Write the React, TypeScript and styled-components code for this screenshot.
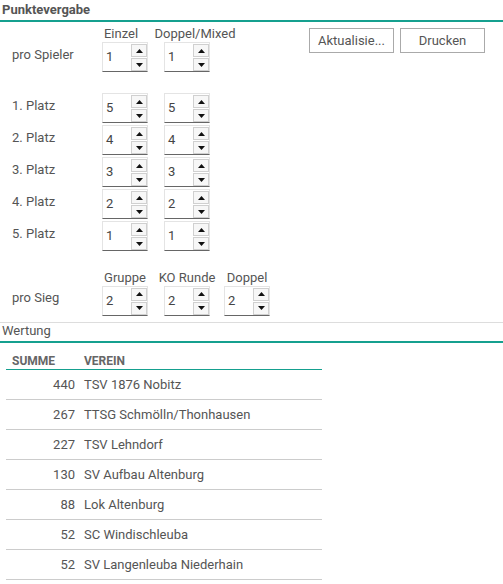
import styled, { createGlobalStyle } from 'styled-components';

const TEAL = '#15a08f';

const GlobalStyle = createGlobalStyle`
  body {
    margin: 0;
    font-family: Roboto, "Liberation Sans", sans-serif;
    font-size: 13px;
    color: #555;
    background: #fff;
  }
`;

type SpinnerProps = { value: number };

const Spinner = ({ value }: SpinnerProps) => (
  <SpinBox>
    <SpinValue>{value}</SpinValue>
    <SpinButtons>
      <SpinButton>
        <Arrow viewBox="0 0 7 4">
          <path d="M0 4 L3.5 0 L7 4 Z" />
        </Arrow>
      </SpinButton>
      <SpinButton>
        <Arrow viewBox="0 0 7 4">
          <path d="M0 0 L3.5 4 L7 0 Z" />
        </Arrow>
      </SpinButton>
    </SpinButtons>
  </SpinBox>
);

const platz = [
  { label: '1. Platz', einzel: 5, doppel: 5 },
  { label: '2. Platz', einzel: 4, doppel: 4 },
  { label: '3. Platz', einzel: 3, doppel: 3 },
  { label: '4. Platz', einzel: 2, doppel: 2 },
  { label: '5. Platz', einzel: 1, doppel: 1 },
];

const wertung = [
  { summe: 440, verein: 'TSV 1876 Nobitz' },
  { summe: 267, verein: 'TTSG Schmölln/Thonhausen' },
  { summe: 227, verein: 'TSV Lehndorf' },
  { summe: 130, verein: 'SV Aufbau Altenburg' },
  { summe: 88, verein: 'Lok Altenburg' },
  { summe: 52, verein: 'SC Windischleuba' },
  { summe: 52, verein: 'SV Langenleuba Niederhain' },
];

const App = (): JSX.Element => {
  return (
    <Page>
      <GlobalStyle />
      <SectionTitle>Punktevergabe</SectionTitle>

      <Panel>
        <Form>
          <HeaderRow>
            <Label />
            <ColHead $width={62} $shift={-4}>Einzel</ColHead>
            <ColHead $width={60} $shift={8}>Doppel/Mixed</ColHead>
          </HeaderRow>
          <Row>
            <Label>pro Spieler</Label>
            <Cell $width={62}><Spinner value={1} /></Cell>
            <Cell $width={60}><Spinner value={1} /></Cell>
          </Row>

          <PlatzList>
            {platz.map(p => (
              <Row key={p.label}>
                <Label>{p.label}</Label>
                <Cell $width={62}><Spinner value={p.einzel} /></Cell>
                <Cell $width={60}><Spinner value={p.doppel} /></Cell>
              </Row>
            ))}
          </PlatzList>

          <SiegBlock>
            <HeaderRow>
              <Label />
              <ColHead $width={62}>Gruppe</ColHead>
              <ColHead $width={60}>KO Runde</ColHead>
              <ColHead $width={60}>Doppel</ColHead>
            </HeaderRow>
            <Row $height={29}>
              <Label>pro Sieg</Label>
              <Cell $width={62}><Spinner value={2} /></Cell>
              <Cell $width={60}><Spinner value={2} /></Cell>
              <Cell $width={60}><Spinner value={2} /></Cell>
            </Row>
          </SiegBlock>
        </Form>

        <Actions>
          <Button>Aktualisie...</Button>
          <Button>Drucken</Button>
        </Actions>
      </Panel>

      <SubTitle>Wertung</SubTitle>

      <Table>
        <thead>
          <tr>
            <Th>Summe</Th>
            <Th>Verein</Th>
          </tr>
        </thead>
        <tbody>
          {wertung.map(w => (
            <tr key={w.verein}>
              <SumCell>{w.summe}</SumCell>
              <NameCell>{w.verein}</NameCell>
            </tr>
          ))}
        </tbody>
      </Table>
    </Page>
  );
};

export default App;

const Page = styled.div`
  width: 503px;
`;

const SectionTitle = styled.div`
  height: 20px;
  padding-left: 2px;
  font-size: 13px;
  font-weight: 700;
  line-height: 19px;
  color: #555;
  border-bottom: 2px solid ${TEAL};
`;

const Panel = styled.div`
  display: flex;
  justify-content: space-between;
  padding: 3px 18px 7px 12px;
  border-bottom: 1px solid #ddd;
`;

const Form = styled.div`
  display: flex;
  flex-direction: column;
`;

const HeaderRow = styled.div`
  display: flex;
  height: 17px;
  align-items: center;
`;

const Row = styled.div<{ $height?: number }>`
  display: flex;
  align-items: center;
  height: ${p => p.$height ?? 30}px;
`;

const PlatzList = styled.div`
  display: flex;
  flex-direction: column;
  gap: 2px;
  margin-top: 21px;
`;

const SiegBlock = styled.div`
  margin-top: 18px;
  display: flex;
  flex-direction: column;
`;

const Label = styled.div`
  width: 90px;
  margin-top: -6px;
`;

const Cell = styled.div<{ $width: number }>`
  width: ${p => p.$width}px;
`;

const ColHead = styled.div<{ $width: number; $shift?: number }>`
  width: 46px;
  margin-right: ${p => p.$width - 46}px;
  display: flex;
  justify-content: center;
  white-space: nowrap;
  position: relative;
  left: ${p => p.$shift ?? 0}px;
`;

const SpinBox = styled.div`
  width: 46px;
  height: 30px;
  box-sizing: border-box;
  display: flex;
  border: 1px solid #e4e4e4;
  border-bottom: 1px solid #666;
`;

const SpinValue = styled.div`
  flex: 1;
  padding: 6px 0 0 3px;
  color: #444;
`;

const SpinButtons = styled.div`
  display: flex;
  flex-direction: column;
  gap: 1px;
  padding-top: 1px;
`;

const SpinButton = styled.div`
  width: 16px;
  height: 14px;
  box-sizing: border-box;
  border: 1px solid #d0d0d0;
  background: #f7f7f7;
  display: flex;
  align-items: center;
  justify-content: center;
`;

const Arrow = styled.svg`
  width: 7px;
  height: 4px;
  fill: #111;
`;

const Actions = styled.div`
  display: flex;
  gap: 6px;
  align-items: flex-start;
  padding-top: 3px;
`;

const Button = styled.div`
  width: 85px;
  height: 25px;
  box-sizing: border-box;
  border: 1px solid #aaa;
  display: flex;
  align-items: center;
  justify-content: center;
  color: #555;
  background: #fff;
`;

const SubTitle = styled.div`
  height: 18px;
  padding-left: 2px;
  line-height: 16px;
  border-bottom: 2px solid ${TEAL};
`;

const Table = styled.table`
  margin: 0 0 0 6px;
  width: 316px;
  border-collapse: collapse;
`;

const Th = styled.th`
  height: 25px;
  text-align: left;
  text-transform: uppercase;
  font-size: 12px;
  font-weight: 700;
  color: #666;
  border-bottom: 1px solid ${TEAL};
  padding: 0 6px 1px;
  vertical-align: bottom;

  &:first-child {
    width: 63px;
  }

  &:last-child {
    padding-left: 3px;
  }
`;

const SumCell = styled.td`
  height: 29px;
  text-align: right;
  padding: 0 6px;
  border-bottom: 1px solid #ccc;
`;

const NameCell = styled.td`
  height: 29px;
  padding: 0 0 0 3px;
  border-bottom: 1px solid #ccc;
`;
